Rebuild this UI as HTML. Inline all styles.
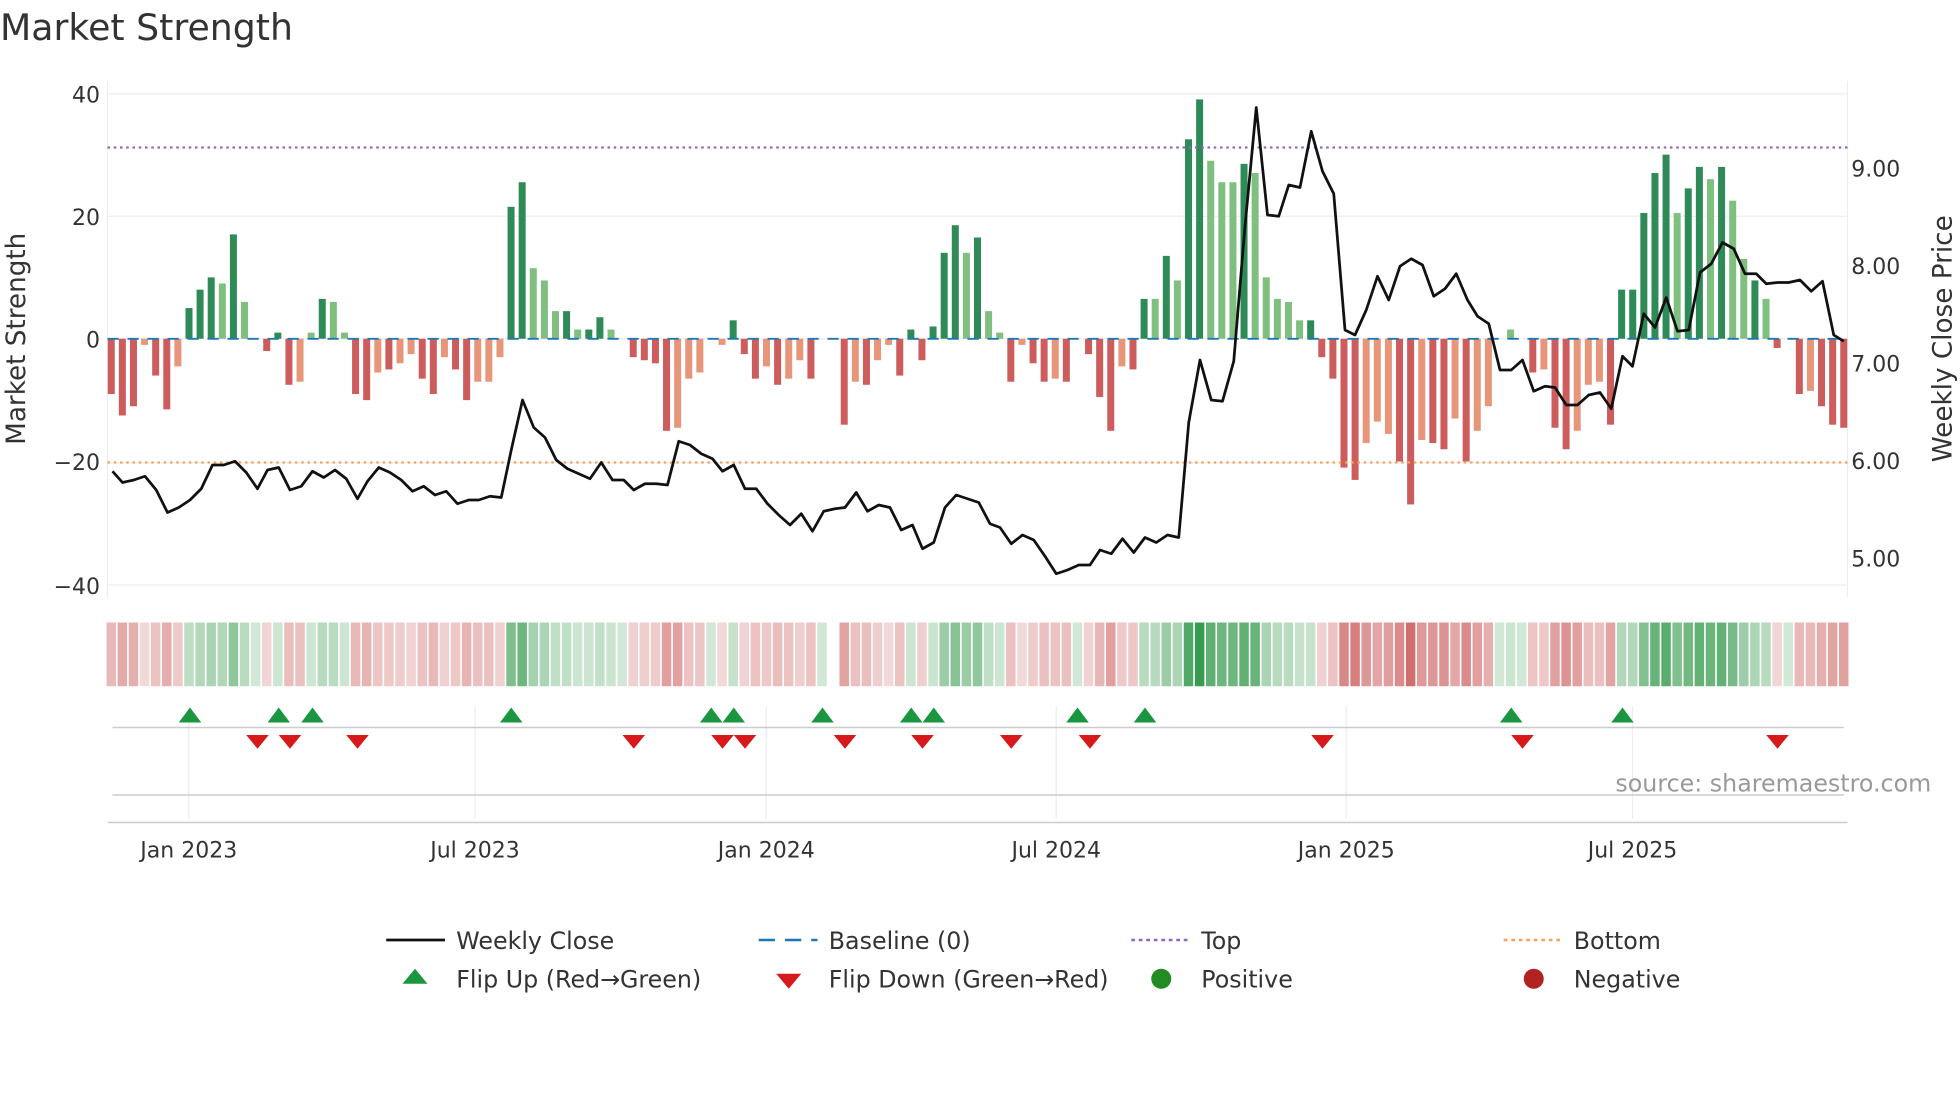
<!DOCTYPE html>
<html><head><meta charset="utf-8"><style>
html,body{margin:0;padding:0;background:#fff;}
svg{display:block;font-family:"DejaVu Sans","Liberation Sans",sans-serif;}
</style></head><body>
<svg id="s" width="1960" height="1102" viewBox="0 0 1568 881.6" xmlns="http://www.w3.org/2000/svg">
<rect width="1568" height="882" fill="#fff"/>
<text x="0" y="32" font-size="29" fill="#333">Market Strength</text>
<g stroke="#eeeeee" stroke-width="1">
<line x1="86" x2="1478" y1="75" y2="75"/><line x1="86" x2="1478" y1="173" y2="173"/><line x1="86" x2="1478" y1="271" y2="271"/><line x1="86" x2="1478" y1="370" y2="370"/><line x1="86" x2="1478" y1="468" y2="468"/>
<line x1="86" x2="86" y1="65" y2="478"/><line x1="1478" x2="1478" y1="65" y2="478"/>
</g>
<g font-size="17.6" fill="#333" text-anchor="end">
<text x="80" y="82">40</text><text x="80" y="180">20</text><text x="80" y="278">0</text><text x="80" y="376">−20</text><text x="80" y="475">−40</text>
</g>
<g font-size="17.6" fill="#333">
<text x="1481" y="141">9.00</text><text x="1481" y="219">8.00</text><text x="1481" y="297">7.00</text><text x="1481" y="375">6.00</text><text x="1481" y="453">5.00</text>
</g>
<text transform="translate(20,271) rotate(-90)" font-size="21" fill="#333" text-anchor="middle">Market Strength</text>
<text transform="translate(1561,271) rotate(-90)" font-size="21" fill="#333" text-anchor="middle">Weekly Close Price</text>
<g id="bars"></g>
<line x1="86" x2="1478" y1="271" y2="271" stroke="#1f77b4" stroke-width="1.5" stroke-dasharray="9,7"/>
<line x1="86" x2="1478" y1="118" y2="118" stroke="#9467bd" stroke-width="1.8" stroke-dasharray="2,3"/>
<line x1="86" x2="1478" y1="370" y2="370" stroke="#f4a460" stroke-width="1.8" stroke-dasharray="2,3"/>
<polyline id="price" fill="none" stroke="#111" stroke-width="2.2" stroke-linejoin="round"/>
<g id="heat"></g>
<g stroke="#eeeeee"><line x1="151" x2="151" y1="565" y2="655"/><line x1="380" x2="380" y1="565" y2="655"/><line x1="613" x2="613" y1="565" y2="655"/><line x1="845" x2="845" y1="565" y2="655"/><line x1="1077" x2="1077" y1="565" y2="655"/><line x1="1306" x2="1306" y1="565" y2="655"/></g>
<line x1="90" x2="1475" y1="582" y2="582" stroke="#cccccc" stroke-width="1.2"/>
<line x1="90" x2="1475" y1="636" y2="636" stroke="#cccccc" stroke-width="1.2"/>
<line x1="86" x2="1478" y1="658" y2="658" stroke="#cccccc" stroke-width="1.2"/>
<g id="marks"></g>
<text x="1545" y="633" font-size="19" fill="#999" text-anchor="end">source: sharemaestro.com</text>
<g font-size="17.6" fill="#333" text-anchor="middle">
<text x="151" y="686">Jan 2023</text><text x="380" y="686">Jul 2023</text><text x="613" y="686">Jan 2024</text><text x="845" y="686">Jul 2024</text><text x="1077" y="686">Jan 2025</text><text x="1306" y="686">Jul 2025</text>
</g>
<g font-size="19" fill="#333">
<line x1="309" x2="356" y1="752" y2="752" stroke="#111" stroke-width="2.2"/><text x="365" y="759">Weekly Close</text>
<line x1="607" x2="654" y1="752" y2="752" stroke="#1f77b4" stroke-width="2" stroke-dasharray="13,8"/><text x="663" y="759">Baseline (0)</text>
<line x1="905" x2="952" y1="752" y2="752" stroke="#9467bd" stroke-width="2" stroke-dasharray="3,3"/><text x="961" y="759">Top</text>
<line x1="1203" x2="1250" y1="752" y2="752" stroke="#f4a460" stroke-width="2" stroke-dasharray="3,3"/><text x="1259" y="759">Bottom</text>
<polygon points="332,775 342,787 322,787" fill="#1a9641"/><text x="365" y="790">Flip Up (Red→Green)</text>
<polygon points="621,779 641,779 631,791" fill="#d7191c"/><text x="663" y="790">Flip Down (Green→Red)</text>
<circle cx="929" cy="783" r="8" fill="#228b22"/><text x="961" y="790">Positive</text>
<circle cx="1227" cy="783" r="8" fill="#b22222"/><text x="1259" y="790">Negative</text>
</g>
<script>
var v=[[-9,0],[-12.5,0],[-11,0],[-1,1],[-6,0],[-11.5,0],[-4.5,1],[5,0],[8,0],[10,0],[9,1],[17,0],[6,1],[0,0],[-2,0],[1,0],[-7.5,0],[-7,1],[1,1],[6.5,0],[6,1],[1,1],[-9,0],[-10,0],[-5.5,1],[-5,0],[-4,1],[-2.5,1],[-6.5,0],[-9,0],[-3,1],[-5,0],[-10,0],[-7,1],[-7,1],[-3,1],[21.5,0],[25.5,0],[11.5,1],[9.5,1],[4.5,1],[4.5,0],[1.5,1],[1.5,0],[3.5,0],[1.5,1],[0,0],[-3,0],[-3.5,0],[-4,0],[-15,0],[-14.5,1],[-6.5,1],[-5.5,1],[0,0],[-1,1],[3,0],[-2.5,0],[-6.5,0],[-4.5,1],[-7.5,0],[-6.5,1],[-3.5,1],[-6.5,0],[0,0],[0,0],[-14,0],[-7,1],[-7.5,0],[-3.5,1],[-1,1],[-6,0],[1.5,0],[-3.5,0],[2,0],[14,0],[18.5,0],[14,1],[16.5,0],[4.5,1],[1,1],[-7,0],[-1,1],[-4,0],[-7,0],[-6.5,1],[-7,0],[0,0],[-2.5,0],[-9.5,0],[-15,0],[-4.5,1],[-5,0],[6.5,0],[6.5,1],[13.5,0],[9.5,1],[32.5,0],[39,0],[29,1],[25.5,1],[25.5,1],[28.5,0],[27,1],[10,1],[6.5,1],[6,1],[3,1],[3,0],[-3,0],[-6.5,0],[-21,0],[-23,0],[-17,1],[-13.5,1],[-15.5,1],[-20,0],[-27,0],[-16.5,1],[-17,0],[-18,0],[-13,1],[-20,0],[-15,1],[-11,1],[0,0],[1.5,1],[0,0],[-5.5,0],[-5,1],[-14.5,0],[-18,0],[-15,1],[-7.5,1],[-7,1],[-14,0],[8,0],[8,0],[20.5,0],[27,0],[30,0],[20.5,1],[24.5,0],[28,0],[26,1],[28,0],[22.5,1],[13,1],[9.5,0],[6.5,1],[-1.5,0],[0,0],[-9,0],[-8.5,1],[-11,0],[-14,0],[-14.5,0]];
var ns="http://www.w3.org/2000/svg",B=document.getElementById('bars'),H=document.getElementById('heat');
function el(t,a,p){var e=document.createElementNS(ns,t);for(var k in a)e.setAttribute(k,a[k]);p.appendChild(e);return e;}
var n=v.length,x0=89,dx=(1475-89)/(n-1);
v.forEach(function(d,i){var x=x0+i*dx,val=d[0],y=271-val*4.91;
 var c=val>=0?(d[1]?'#7fbf7f':'#2e8b57'):(d[1]?'#e8967a':'#cd5c5c');
 if(val!=0)el('rect',{x:x-2.8,y:Math.min(y,271),width:5.6,height:Math.abs(val*4.91),fill:c},B);
 if(Math.abs(x-665)<5)return;
 var hc=val>=0?'rgba(46,150,70,'+(0.22+Math.min(1,val/40)*0.75)+')':'rgba(200,80,80,'+(0.2+Math.min(1,-val/28)*0.65)+')';
 el('rect',{x:x-3.8,y:498,width:7.6,height:51,fill:hc},H);
});
var p=[[90,377],[98,386],[107,384],[116,381],[125,392],[134,410],[143,406],[152,400],[161,391],[170,372],[179,372],[188,369],[197,378],[206,391],[214,376],[223,374],[232,392],[241,389],[250,377],[259,382],[268,376],[277,383],[286,399],[294,385],[303,374],[312,378],[321,384],[330,393],[339,389],[348,396],[357,393],[366,403],[375,400],[383,400],[392,397],[401,398],[409,360],[418,320],[427,342],[436,350],[445,368],[454,375],[463,379],[472,383],[481,370],[490,384],[499,384],[507,392],[516,387],[525,387],[534,388],[543,353],[552,356],[561,363],[570,367],[578,377],[587,372],[596,391],[605,391],[614,403],[623,412],[632,420],[641,411],[650,425],[659,409],[668,407],[676,406],[685,394],[694,409],[703,404],[712,406],[721,424],[730,420],[738,439],[747,434],[756,406],[765,396],[774,399],[783,402],[792,419],[800,422],[809,435],[818,428],[827,432],[836,445],[845,459],[854,456],[863,452],[872,452],[880,440],[889,443],[898,431],[907,442],[916,430],[925,434],[934,428],[943,430],[951,338],[960,288],[969,320],[978,321],[987,289],[996,181],[1005,86],[1014,172],[1023,173],[1031,148],[1040,150],[1049,105],[1058,137],[1067,155],[1076,264],[1084,268],[1093,248],[1102,221],[1111,240],[1120,213],[1129,207],[1138,212],[1147,237],[1156,231],[1165,219],[1174,240],[1182,253],[1191,259],[1200,296],[1209,296],[1218,288],[1227,313],[1236,309],[1244,310],[1253,324],[1262,324],[1271,316],[1280,314],[1289,327],[1298,285],[1306,293],[1315,251],[1324,262],[1333,238],[1342,265],[1351,264],[1360,218],[1369,211],[1378,194],[1387,199],[1396,219],[1405,219],[1413,227],[1422,226],[1431,226],[1440,224],[1449,233],[1458,225],[1467,268],[1475,273]];
document.getElementById('price').setAttribute('points',p.map(function(q){return q.join(',')}).join(' '));
var M=document.getElementById('marks');
[152,223,250,409,569,587,658,729,747,862,916,1209,1298].forEach(function(x){el('polygon',{points:(x)+',566 '+(x+9)+',578 '+(x-9)+',578',fill:'#1a9641'},M);});
[206,232,286,507,578,596,676,738,809,872,1058,1218,1422].forEach(function(x){el('polygon',{points:(x-9)+',588 '+(x+9)+',588 '+x+',599',fill:'#d7191c'},M);});
</script>
</svg>
</body></html>
